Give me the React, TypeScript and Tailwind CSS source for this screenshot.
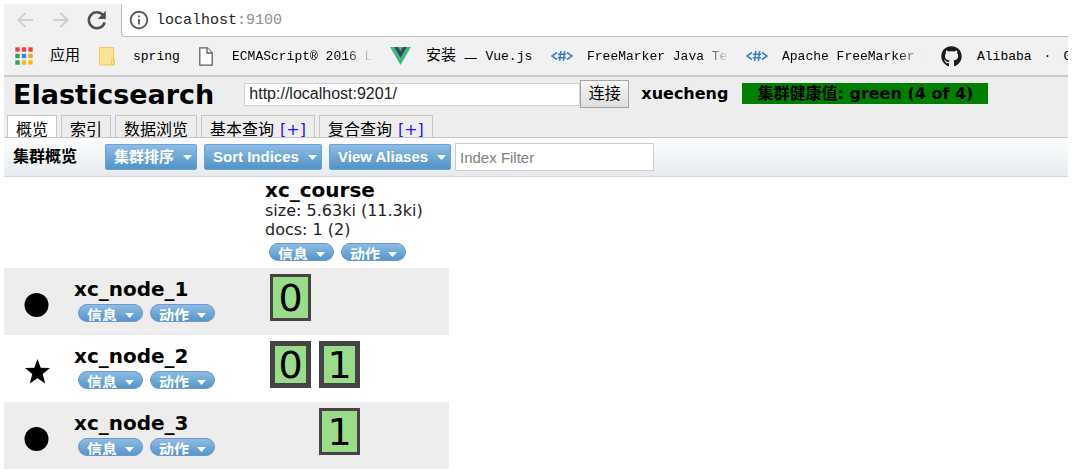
import type { ReactNode } from "react";
import { FaGithub } from "react-icons/fa";
import { MdArrowBack, MdArrowForward, MdInfoOutline } from "react-icons/md";

function Caret() {
  return (
    <svg width="9" height="5" viewBox="0 0 9 5" fill="currentColor" aria-hidden="true">
      <path d="M0 0h9L4.500 5z" />
    </svg>
  );
}

function ReloadIcon() {
  return (
    <svg width="20" height="20" viewBox="0 0 20 20" aria-hidden="true">
      <path d="M16.200 5.300A8 8 0 1 0 17.600 12.300" fill="none" stroke="currentColor" strokeWidth="2.600" />
      <path d="M18.800.8v8.100h-8.100z" fill="currentColor" />
    </svg>
  );
}

function AppsIcon() {
  const colors = ["#ea4335", "#ea4335", "#ea4335", "#34a05a", "#2d8cf0", "#f5a623", "#34a05a", "#f9b80c", "#f9b80c"];
  return (
    <svg width="18" height="18" viewBox="0 0 18 18" aria-hidden="true">
      {colors.map((c, i) => (
        <rect key={i} x={(i % 3) * 6.5 + 0.3} y={Math.floor(i / 3) * 6.5 + 0.3} width="4.4" height="4.4" fill={c} />
      ))}
    </svg>
  );
}

function FolderIcon() {
  return (
    <svg width="16" height="19" viewBox="0 0 16 19" aria-hidden="true">
      <path d="M.5.5h14v12h1v5.500H.5z" fill="#fde293" stroke="#edc95c" />
      <path d="M12.500 17.500v-5h2.500v5z" fill="#fde293" stroke="#edc95c" />
    </svg>
  );
}

function PageIcon() {
  return (
    <svg width="14" height="19" viewBox="0 0 14 19" fill="#fff" stroke="#5f5f5f" strokeWidth="1.300" aria-hidden="true">
      <path d="M.8.8h7.400l5 5v12.400H.8z" />
      <path d="M8 .8V6h5.200" />
    </svg>
  );
}

function VueIcon() {
  return (
    <svg width="21" height="18" viewBox="0 0 21 18" aria-hidden="true">
      <path d="M0 0h21L10.500 18z" fill="#41b883" />
      <path d="M4.200 0h12.600L10.500 10.800z" fill="#35495e" />
      <path d="M8 0h5l-2.500 4.200z" fill="#41b883" />
    </svg>
  );
}

function FreeMarkerIcon() {
  return (
    <svg width="22" height="12" viewBox="0 0 22 12" fill="none" stroke="#3f7fcf" strokeWidth="1.600" aria-hidden="true">
      <path d="M6 2.500L1 6l5 3.500M16 2.500L21 6l-5 3.500M9.800 1L8.600 11M13.600 1l-1.200 10M7 4.200h8.200M6.800 7.800h8.200" />
    </svg>
  );
}

function Bookmark({ icon, children, className = "" }: { icon: ReactNode; children: ReactNode; className?: string }) {
  return (
    <a href="#" className="flex shrink-0 items-center">
      {icon}
      <span className={`flex items-center overflow-hidden pt-0.5 whitespace-pre ${className}`}>{children}</span>
    </a>
  );
}

const fade = "[mask-image:linear-gradient(to_right,black_80%,transparent)]";

function Pills() {
  return (
    <div className="flex gap-[7px] pl-1">
      {["信息", "动作"].map((t) => (
        <button
          key={t}
          type="button"
          className="flex h-[18px] w-[65px] items-start justify-center gap-2 overflow-hidden rounded-full border border-[#6f96cf] bg-linear-to-b from-[#8dbce4] to-[#5596c8] text-[15px] leading-[22px] font-bold text-white"
        >
          {t}
          <span className="pt-2">
            <Caret />
          </span>
        </button>
      ))}
    </div>
  );
}

function MenuButton({ label, className = "" }: { label: string; className?: string }) {
  return (
    <button
      type="button"
      className={`flex h-[26px] items-center justify-between rounded-xs border border-[#6f9fd6] bg-linear-to-b from-[#8dbce4] to-[#4f93c6] pr-1 pl-2 font-bold whitespace-nowrap text-white ${className}`}
    >
      {label}
      <Caret />
    </button>
  );
}

const tabs = [
  { label: "概览", active: true },
  { label: "索引" },
  { label: "数据浏览" },
  { label: "基本查询", plus: true },
  { label: "复合查询", plus: true },
];

type Shard = { id: number; primary: boolean } | null;

const nodes: { name: string; master: boolean; shards: Shard[] }[] = [
  { name: "xc_node_1", master: false, shards: [{ id: 0, primary: false }, null] },
  { name: "xc_node_2", master: true, shards: [{ id: 0, primary: true }, { id: 1, primary: true }] },
  { name: "xc_node_3", master: false, shards: [null, { id: 1, primary: false }] },
];

function ShardTile({ shard }: { shard: Shard }) {
  if (!shard) return <div className="w-[41px]" />;
  return (
    <button
      type="button"
      className={`flex h-[47px] w-[41px] items-center justify-center border-[#444] bg-[#99dd88] text-[38px] leading-none ${shard.primary ? "border-[5px]" : "border-[3px]"}`}
    >
      {shard.id}
    </button>
  );
}

export default function App() {
  return (
    <div className="overflow-hidden bg-white pt-1 pr-[21px] pl-1 font-['DejaVu_Sans','Noto_Sans_CJK_SC',sans-serif] text-base text-black">
      <header className="bg-[#f1f1f1] font-['Liberation_Mono','Noto_Sans_CJK_SC',monospace]">
        <div className="flex h-[33px]">
          <nav className="flex w-[117px] shrink-0 items-center gap-3 border-b border-[#f1f1f1] pl-[9px]">
            <button type="button" aria-label="Back" className="text-[#cfcfcf]">
              <MdArrowBack size={24} />
            </button>
            <button type="button" aria-label="Forward" className="text-[#cfcfcf]">
              <MdArrowForward size={24} />
            </button>
            <button type="button" aria-label="Reload" className="ml-0.5 text-[#505050]">
              <ReloadIcon />
            </button>
          </nav>
          <div className="flex flex-1 items-center gap-1.5 rounded-bl-sm border-b border-l border-[#bdbdbd] bg-white pl-1.5 text-[15px] text-[#222]">
            <MdInfoOutline size={22} color="#5a5a5a" />
            <span className="pt-0.5">
              localhost<span className="text-[#909090]">:9100</span>
            </span>
          </div>
        </div>
        <div className="flex h-10 items-center overflow-hidden border-b-2 border-[#c9c9c9] pl-[11px] text-[13px]">
          <Bookmark icon={<AppsIcon />} className="ml-[17px] w-[49px] text-[15px]">
            应用
          </Bookmark>
          <Bookmark icon={<FolderIcon />} className="ml-[18px] w-[66px]">
            spring
          </Bookmark>
          <Bookmark icon={<PageIcon />} className={`mr-[17px] ml-[19px] w-[141px] ${fade}`}>
            ECMAScript® 2016 L
          </Bookmark>
          <Bookmark icon={<VueIcon />} className="ml-[15px] w-[125px] gap-2">
            <span className="text-[15px]">安装</span>
            <span className="font-['Noto_Sans_CJK_SC',sans-serif] text-[15px]">—</span>
            <span>Vue.js</span>
          </Bookmark>
          <Bookmark icon={<FreeMarkerIcon />} className={`mr-4 ml-[14px] w-[143px] ${fade}`}>
            FreeMarker Java Te
          </Bookmark>
          <Bookmark icon={<FreeMarkerIcon />} className={`mr-4 ml-[14px] w-[143px] ${fade}`}>
            Apache FreeMarker L
          </Bookmark>
          <Bookmark icon={<FaGithub size={21} color="#1b1b1b" />} className="ml-[15px] gap-3">
            <span>Alibaba</span>
            <span>·</span>
            <span>G</span>
          </Bookmark>
        </div>
      </header>

      <section className="border-b border-[#c6c6c6] bg-[#ededed]">
        <div className="flex h-[38px] items-start pl-[9px]">
          <h1 className="mr-[30px] text-[27px] leading-9 font-bold">Elasticsearch</h1>
          <form className="flex items-center pt-[3px]" onSubmit={(e) => e.preventDefault()}>
            <input
              aria-label="Cluster address"
              defaultValue="http://localhost:9201/"
              className="h-[23px] w-[336px] border border-[#d0d0d0] bg-white px-1 font-['Liberation_Sans',sans-serif] text-[#222]"
            />
            <button
              type="button"
              className="h-7 w-[49px] border border-[#a5a5a5] bg-linear-to-b from-[#f6f6f6] to-[#dedede] leading-none"
            >
              连接
            </button>
          </form>
          <strong className="ml-3 leading-[34px]">xuecheng</strong>
          <strong className="mt-1.5 ml-3.5 h-[21px] bg-[#008000] px-[15px] leading-[22px] whitespace-nowrap">
            集群健康值: green (4 of 4)
          </strong>
        </div>
        <nav className="flex gap-1 pl-[3px]">
          {tabs.map((t) => (
            <a
              key={t.label}
              href="#"
              className={`flex h-[22px] gap-1.5 overflow-hidden border-x border-t border-[#c6c6c6] px-2 leading-7 ${t.active ? "bg-white" : "bg-[#ededed]"}`}
            >
              {t.label}
              {t.plus && <span className="text-[#2a12ff]">[+]</span>}
            </a>
          ))}
        </nav>
      </section>

      <section className="flex h-[39px] items-center border-b border-[#d2d7dc] bg-linear-to-b from-[#fdfefe] to-[#e6eaee] pl-[9px] font-['Liberation_Sans','Noto_Sans_CJK_SC',sans-serif] text-[15px]">
        <h2 className="mr-7 text-base font-bold">集群概览</h2>
        <div className="flex items-center gap-[7px]">
          <MenuButton label="集群排序" className="w-[92px]" />
          <MenuButton label="Sort Indices" className="w-[118px]" />
          <MenuButton label="View Aliases" className="w-[122px]" />
        </div>
        <input
          aria-label="Index Filter"
          placeholder="Index Filter"
          className="ml-1 h-7 w-[199px] border border-[#ccc] bg-white px-1 placeholder:text-[#808080]"
        />
      </section>

      <table className="border-collapse text-left">
        <thead>
          <tr className="h-[91px] align-top">
            <td className="w-[70px]" />
            <td className="w-[191px]" />
            <th scope="col" className="w-[184px] pt-0.5 font-normal">
              <div className="text-xl leading-[22px] font-bold">xc_course</div>
              <div className="leading-[19px] text-[#222]">size: 5.63ki (11.3ki)</div>
              <div className="mb-1 leading-[19px] text-[#222]">docs: 1 (2)</div>
              <Pills />
            </th>
          </tr>
        </thead>
        <tbody>
          {nodes.map((n) => (
            <tr key={n.name} className="h-[67px] align-top odd:bg-[#ededed]">
              <td className="pt-6 pl-5">
                <svg width="26" height="26" viewBox="0 0 26 26" aria-hidden="true">
                  {n.master ? (
                    <path d="M13.500 0l3.200 8.800 9.300.3-7.300 5.800 2.500 9.600L13.500 19.200 5.800 24.500l2.500-9.600L1 9.100l9.300-.3z" />
                  ) : (
                    <circle cx="12.500" cy="13" r="12" />
                  )}
                </svg>
              </td>
              <th scope="row" className="pt-2.5 text-xl leading-[22px] font-bold">
                <div className="mb-1">{n.name}</div>
                <Pills />
              </th>
              <td className="pt-1.5 pl-[5px]">
                <div className="flex gap-2">
                  {n.shards.map((s, i) => (
                    <ShardTile key={i} shard={s} />
                  ))}
                </div>
              </td>
            </tr>
          ))}
        </tbody>
      </table>
    </div>
  );
}
